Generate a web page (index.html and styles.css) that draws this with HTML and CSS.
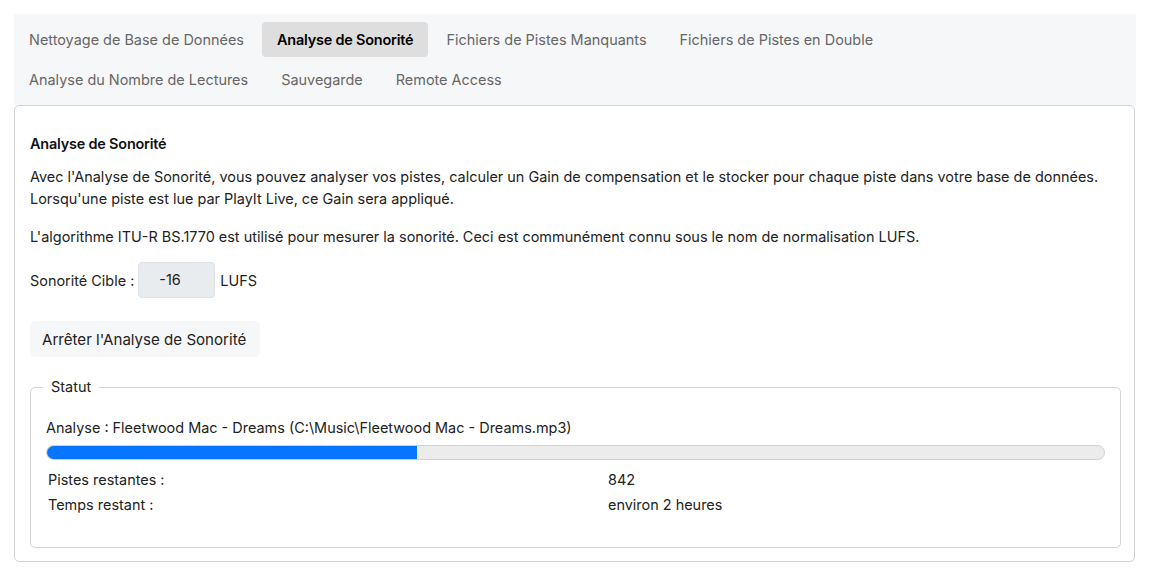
FILE: index.html
```html
<!DOCTYPE html>
<html lang="fr">
<head>
<meta charset="utf-8">
<link rel="stylesheet" href="styles.css">
</head>
<body>
<div class="wrap">
  <nav class="tabs">
    <div class="tab-row">
      <span class="tab">Nettoyage de Base de Données</span>
      <span class="tab active">Analyse de Sonorité</span>
      <span class="tab">Fichiers de Pistes Manquants</span>
      <span class="tab">Fichiers de Pistes en Double</span>
    </div>
    <div class="tab-row">
      <span class="tab">Analyse du Nombre de Lectures</span>
      <span class="tab">Sauvegarde</span>
      <span class="tab">Remote Access</span>
    </div>
  </nav>
  <section class="panel">
    <h2 class="title">Analyse de Sonorité</h2>
    <p class="para">Avec l'Analyse de Sonorité, vous pouvez analyser vos pistes, calculer un Gain de compensation et le stocker pour chaque piste dans votre base de données.<br>Lorsqu'une piste est lue par PlayIt Live, ce Gain sera appliqué.</p>
    <p class="para para2">L'algorithme ITU-R BS.1770 est utilisé pour mesurer la sonorité. Ceci est communément connu sous le nom de normalisation LUFS.</p>
    <div class="target">
      <span>Sonorité Cible :</span>
      <span class="input">-16</span>
      <span>LUFS</span>
    </div>
    <button class="btn">Arrêter l'Analyse de Sonorité</button>
    <fieldset class="status">
      <legend>Statut</legend>
      <div class="current">Analyse : Fleetwood Mac - Dreams (C:\Music\Fleetwood Mac - Dreams.mp3)</div>
      <div class="progress"><div class="fill" style="width:35%"></div></div>
      <div class="stats">
        <span>Pistes restantes :</span><span>842</span>
        <span>Temps restant :</span><span>environ 2 heures</span>
      </div>
    </fieldset>
  </section>
</div>
</body>
</html>
```
FILE: styles.css
```css
* { box-sizing: border-box; }
html, body { margin: 0; padding: 0; background: #fff; }
body {
  font-family: Inter, "Liberation Sans", sans-serif;
  font-size: 14.45px;
  color: #222;
  padding: 14px;
}
.wrap { width: 1122px; }
.tabs {
  background: #f6f7f9;
  padding: 8px 0 8px 0;
  display: flex;
  flex-direction: column;
  gap: 5px;
}
.tab-row { display: flex; gap: 3px; }
.tab {
  height: 35px;
  line-height: 35px;
  padding: 0 15px;
  color: #666;
  border-radius: 4px;
  white-space: nowrap;
}
.tab.active {
  background: #dedede;
  color: #000;
  font-weight: 600;
  letter-spacing: -0.2px;
}
.panel {
  border: 1px solid #d4d4d4;
  border-radius: 5px;
  padding: 15px 13px 13px 15px;
  width: 1121px;
}
.title {
  font-size: 14.45px;
  font-weight: 600;
  letter-spacing: -0.2px;
  margin: 13px 0 12px 0;
  line-height: 20px;
  color: #111;
}
.para { margin: 0; line-height: 22px; }
.para2 { margin-top: 16px; }
.target {
  display: flex;
  align-items: center;
  gap: 5px;
  margin-top: 14px;
}
.input {
  width: 77px;
  height: 36px;
  line-height: 34px;
  padding-left: 20px;
  background: #e9ecef;
  border: 1px solid #dee2e6;
  border-radius: 4px;
  margin-left: -1px;
}
.btn {
  display: block;
  margin-top: 23px;
  height: 36px;
  width: 230px;
  padding: 0 12px;
  background: #f6f7f9;
  border: none;
  border-radius: 5px;
  font-family: inherit;
  font-size: 15.1px;
  color: #222;
  text-align: left;
}
.status {
  margin: 20px 0 0 0;
  border: 1px solid #d4d4d4;
  border-radius: 5px;
  padding: 21px 15px 30px 15px;
  min-width: 0;
}
.status legend {
  padding: 0 8px;
  margin-left: -3px;
  line-height: 20px;
}
.current { line-height: 20px; }
.progress {
  margin-top: 7px;
  height: 15px;
  background: #ececec;
  border: 1px solid #d0d0d0;
  border-radius: 8px;
  overflow: hidden;
}
.fill { height: 100%; background: #0875ff; }
.stats {
  display: grid;
  grid-template-columns: 560px 1fr;
  margin-top: 7px;
}
.stats span { padding: 2px; line-height: 21px; }
```
